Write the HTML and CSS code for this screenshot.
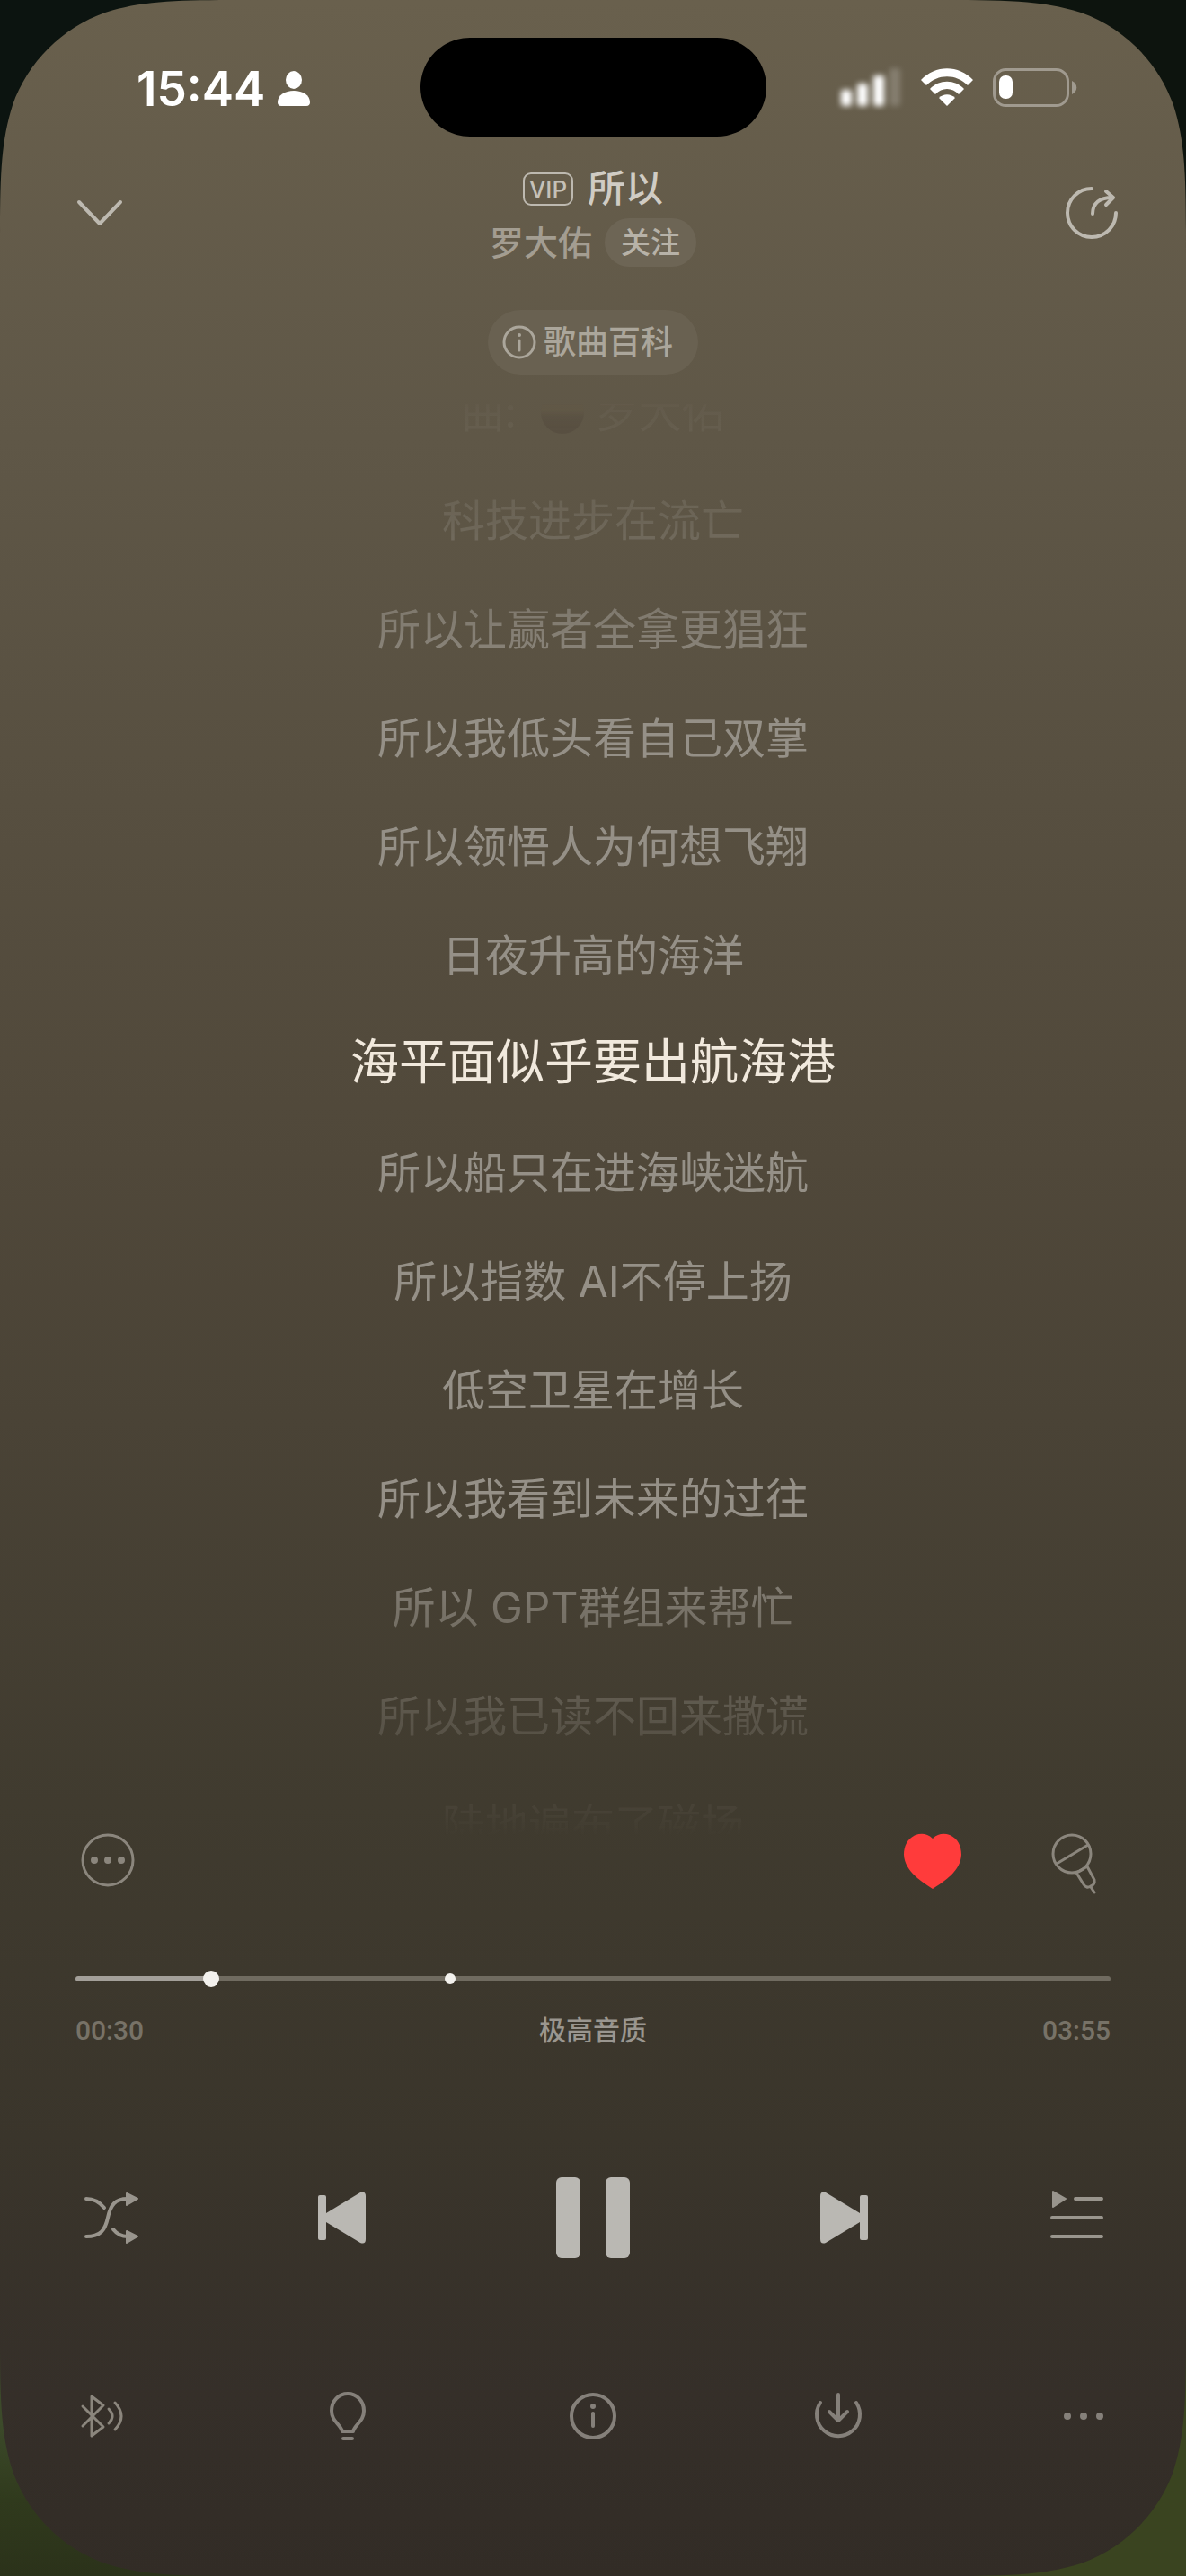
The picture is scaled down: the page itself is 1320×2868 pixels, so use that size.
FILE: index.html
```html
<!DOCTYPE html>
<html lang="zh-CN">
<head>
    <meta charset="UTF-8">
    <meta name="viewport" content="width=device-width, initial-scale=1.0">
    <title>所以 - 罗大佑</title>
    <link rel="stylesheet" href="styles.css">
</head>
<body>
    <div class="player">
        <!-- Скругления экрана -->
        <svg class="corner corner-tl" viewBox="0 0 284 284"><path d="M0 0V284C0 202 0 161 14 117C31 69 69 31 117 14C161 0 202 0 284 0Z"/></svg>
        <svg class="corner corner-tr" viewBox="0 0 284 284"><path d="M0 0V284C0 202 0 161 14 117C31 69 69 31 117 14C161 0 202 0 284 0Z"/></svg>
        <svg class="corner corner-bl" viewBox="0 0 284 284">
            <defs>
                <linearGradient id="grass" x1="0" y1="0" x2="0" y2="1">
                    <stop offset="0" stop-color="#2b321a"/>
                    <stop offset="0.3" stop-color="#303a1d"/>
                    <stop offset="0.6" stop-color="#3c4a2a"/>
                </linearGradient>
            </defs>
            <path d="M0 0V284C0 202 0 161 14 117C31 69 69 31 117 14C161 0 202 0 284 0Z"/>
        </svg>
        <svg class="corner corner-br" viewBox="0 0 284 284"><path d="M0 0V284C0 202 0 161 14 117C31 69 69 31 117 14C161 0 202 0 284 0Z"/></svg>

        <div class="status-bar">
            <div class="status-left">
                <span class="clock">15:44</span>
                <svg class="person" viewBox="0 0 36 40" width="36" height="40">
                    <ellipse cx="18" cy="10" rx="9" ry="10"/>
                    <path d="M0 35C0 27 8 22 18 22S36 27 36 35C36 37 35 39 32 39H4C1 39 0 37 0 35Z"/>
                </svg>
            </div>
            <div class="island"></div>
            <div class="status-right">
                <svg class="signal" viewBox="0 0 68 44" width="68" height="44">
                    <rect x="1" y="25" width="12" height="18" rx="3"/>
                    <rect x="19" y="18" width="12" height="25" rx="3"/>
                    <rect x="37" y="9" width="12" height="34" rx="3"/>
                    <rect x="55" y="1" width="12" height="42" rx="3" opacity=".2"/>
                </svg>
                <svg class="wifi" viewBox="0 0 58 42" width="58" height="42">
                    <path d="M0 13C16-4 42-4 58 13L52 19C39 6 19 6 6 19Z"/>
                    <path d="M10 23C20 12 38 12 48 23L42 29C35 21 23 21 16 29Z"/>
                    <path d="M20 33C25 28 33 28 38 33L29 42Z"/>
                </svg>
                <svg class="battery" viewBox="0 0 94 43" width="94" height="43">
                    <rect class="battery-shell" x="1.5" y="1.5" width="82" height="40" rx="13"/>
                    <path class="battery-cap" d="M88 14C95 17 95 26 88 29Z"/>
                    <rect x="7" y="8" width="15" height="26" rx="7"/>
                </svg>
            </div>
        </div>

        <header class="header">
            <button class="icon-btn light" aria-label="收起">
                <svg viewBox="0 0 96 96"><path d="M22 33L45 57L68 33"/></svg>
            </button>
            <div class="song">
                <h1 class="song-title"><span class="vip">VIP</span>所以</h1>
                <div class="song-artist">
                    <a href="#" class="artist">罗大佑</a>
                    <button class="follow">关注</button>
                </div>
            </div>
            <button class="icon-btn light" aria-label="分享">
                <svg viewBox="0 0 96 96">
                    <path d="M57 18A27 27 0 1 0 84 45"/>
                    <path d="M58 46C58 34 66 28 80 28M73 21L81 28L73 36"/>
                </svg>
            </button>
        </header>

        <button class="wiki">
            <svg viewBox="0 0 38 38" width="38" height="38">
                <circle cx="19" cy="19" r="17"/>
                <path d="M19 17V28"/>
                <circle class="fill" cx="19" cy="11" r="2"/>
            </svg>
            歌曲百科
        </button>

        <main class="lyrics">
            <ul class="lyrics-list">
                <li>曲: <span class="avatar"></span>罗大佑</li>
                <li>科技进步在流亡</li>
                <li>所以让赢者全拿更猖狂</li>
                <li>所以我低头看自己双掌</li>
                <li>所以领悟人为何想飞翔</li>
                <li>日夜升高的海洋</li>
                <li><span class="current">海平面似乎要出航海港</span></li>
                <li>所以船只在进海峡迷航</li>
                <li>所以指数 AI不停上扬</li>
                <li>低空卫星在增长</li>
                <li>所以我看到未来的过往</li>
                <li>所以 GPT群组来帮忙</li>
                <li>所以我已读不回来撒谎</li>
                <li>陆地遍布了磁场</li>
            </ul>
        </main>

        <div class="actions">
            <button class="icon-btn thin" aria-label="更多歌词选项">
                <svg viewBox="0 0 96 96">
                    <circle cx="54" cy="48" r="28"/>
                    <g class="fill"><circle cx="39" cy="48" r="4"/><circle cx="54" cy="48" r="4"/><circle cx="69" cy="48" r="4"/></g>
                </svg>
            </button>
            <div class="actions-right">
                <button class="icon-btn heart" aria-label="喜欢">
                    <svg viewBox="0 0 96 96"><path d="M48 24C54 18 61 18 67 20C76 24 80 32 80 42C79 60 62 71 48 80C34 71 17 60 16 42C16 32 20 24 29 20C35 18 42 18 48 24Z"/></svg>
                </button>
                <button class="icon-btn thin" aria-label="K歌">
                    <svg viewBox="0 0 96 96">
                        <circle cx="35" cy="41" r="21"/>
                        <path d="M18 52L53 31M40 62L48 75Q51 80 56 77Q61 75 60 70L52 55M56 78L60 84M40 62L52 55"/>
                    </svg>
                </button>
            </div>
        </div>

        <div class="progress">
            <input class="progress-range" type="range" min="0" max="235" step="0.1" value="29.4" aria-label="播放进度">
            <span class="chorus-mark"></span>
        </div>
        <div class="times">
            <span>00:30</span>
            <button class="quality">极高音质</button>
            <span>03:55</span>
        </div>

        <div class="controls">
            <button class="icon-btn medium" aria-label="随机播放">
                <svg viewBox="0 0 96 96">
                    <path d="M30 27C38 27 45 31 50 37M30 69C46 69 51 62 54 48C57 34 62 27 76 27M60 61C64 66 69 69 76 69"/>
                    <path class="fill round" d="M75 21L87 27L75 34ZM75 63L87 69L75 76Z"/>
                </svg>
            </button>
            <button class="icon-btn solid" aria-label="上一首">
                <svg viewBox="0 0 96 96">
                    <rect x="15" y="23" width="9" height="50" rx="2"/>
                    <path d="M24 43L62 20Q68 18 68 24V72Q68 78 62 76L24 53Z"/>
                </svg>
            </button>
            <button class="icon-btn solid" aria-label="暂停">
                <svg viewBox="0 0 96 96">
                    <rect x="7" y="3" width="27" height="90" rx="6"/>
                    <rect x="62" y="3" width="27" height="90" rx="6"/>
                </svg>
            </button>
            <button class="icon-btn solid" aria-label="下一首">
                <svg viewBox="0 0 96 96">
                    <rect x="72" y="23" width="9" height="50" rx="2"/>
                    <path d="M72 43L34 20Q28 18 28 24V72Q28 78 34 76L72 53Z"/>
                </svg>
            </button>
            <button class="icon-btn medium" aria-label="播放列表">
                <svg viewBox="0 0 96 96">
                    <path d="M39 27H68M13 48H68M13 69H68"/>
                    <path class="fill round" d="M14 19L28 27L14 36Z"/>
                </svg>
            </button>
        </div>

        <nav class="toolbar">
            <button class="icon-btn thin" aria-label="蓝牙设备">
                <svg viewBox="0 0 96 96">
                    <path d="M26 37L49 60L36 70V26L49 36L26 59"/>
                    <path d="M55 40Q63 48 55 56M62 33Q76 48 62 63"/>
                </svg>
            </button>
            <button class="icon-btn" aria-label="灵感">
                <svg viewBox="0 0 96 96">
                    <path d="M42 65H54C56 57 66 54 66 42C66 31 58 23 48 23S30 31 30 42C30 54 40 57 42 65ZM43 73H53"/>
                </svg>
            </button>
            <button class="icon-btn" aria-label="歌曲信息">
                <svg viewBox="0 0 96 96">
                    <circle cx="48" cy="48" r="24"/>
                    <path d="M48 45V59"/>
                    <circle class="fill" cx="48" cy="37" r="3"/>
                </svg>
            </button>
            <button class="icon-btn" aria-label="下载">
                <svg viewBox="0 0 96 96">
                    <path d="M28 33A24 24 0 1 0 68 33M48 24V52M38 43L48 53L58 43"/>
                </svg>
            </button>
            <button class="icon-btn" aria-label="更多">
                <svg viewBox="0 0 96 96">
                    <g class="fill"><circle cx="30" cy="48" r="4"/><circle cx="48" cy="48" r="4"/><circle cx="66" cy="48" r="4"/></g>
                </svg>
            </button>
        </nav>
    </div>
</body>
</html>
```

FILE: styles.css
```css
* {
    margin: 0;
    padding: 0;
    box-sizing: border-box;
}
body {
    font-family: Inter, "Noto Sans CJK SC", sans-serif;
    background-color: #332d27;
}
button {
    border: none;
    background: none;
    color: inherit;
    font: inherit;
    cursor: pointer;
}
a {
    color: inherit;
    text-decoration: none;
}
.player {
    position: relative;
    display: flex;
    flex-direction: column;
    height: 100vh;
    padding: 42px 0 130px;
    background: linear-gradient(#69604d 0%, #5f5747 17%, #574f40 31%, #50483a 45%, #4a4336 55%, #403b2f 70%, #3a352b 83%, #352f29 93%, #322c26 100%);
}

/* Углы экрана */
.corner {
    position: absolute;
    width: 284px;
    height: 284px;
}
.corner-tl {
    top: 0;
    left: 0;
    fill: #0c1410;
}
.corner-tr {
    top: 0;
    right: 0;
    fill: #0d140e;
    transform: scaleX(-1);
}
.corner-bl {
    bottom: 0;
    left: 0;
    fill: url(#grass);
    transform: scaleY(-1);
}
.corner-bl path {
    fill: url(#grass);
}
.corner-br {
    bottom: 0;
    right: 0;
    fill: #3a4420;
    transform: scale(-1);
}

/* Строка состояния */
.status-bar {
    display: grid;
    grid-template-columns: 1fr 385px 1fr;
    align-items: center;
    height: 110px;
    color: #fff;
    fill: #fff;
}
.status-left {
    display: flex;
    align-items: center;
    gap: 14px;
    padding: 3px 0 0 152px;
}
.clock {
    font-size: 53px;
    font-weight: 600;
    line-height: 60px;
}
.island {
    height: 110px;
    border-radius: 55px;
    background-color: #000;
}
.status-right {
    display: flex;
    align-items: center;
    justify-content: flex-end;
    gap: 22px;
    padding-right: 121px;
}
.signal {
    filter: blur(3px);
}
.battery-shell {
    fill: none;
    stroke: #a09a8f;
    stroke-width: 3;
}
.battery-cap {
    fill: #a09a8f;
}

/* Кнопки с иконками */
.icon-btn {
    width: 96px;
    height: 96px;
    color: #85807a;
}
.icon-btn svg {
    display: block;
    width: 96px;
    height: 96px;
    fill: none;
    stroke: currentColor;
    stroke-width: 4;
    stroke-linecap: round;
    stroke-linejoin: round;
}
.icon-btn .fill {
    fill: currentColor;
    stroke: none;
}
.icon-btn .round {
    stroke: currentColor;
    stroke-width: 2;
}
.light {
    color: #bdb9b0;
}
.thin {
    color: #8b867d;
}
.thin svg {
    stroke-width: 3;
}
.medium {
    color: #99958d;
}
.solid {
    color: #bab8b3;
}
.solid svg,
.heart svg {
    fill: currentColor;
    stroke: none;
}
.heart {
    color: #ff3b3b;
}

/* Шапка */
.header {
    display: flex;
    align-items: center;
    justify-content: space-between;
    margin-top: 31px;
    padding: 0 66px;
}
.song {
    display: flex;
    flex-direction: column;
    align-items: center;
    gap: 6px;
}
.song-title {
    display: flex;
    align-items: center;
    gap: 16px;
    height: 54px;
    color: #d0ccc4;
    font-size: 42px;
    font-weight: 500;
    line-height: 54px;
}
.vip {
    height: 37px;
    padding: 0 5px;
    border: 2px solid #bdb9b0;
    border-radius: 9px;
    color: #c5c1b8;
    font-size: 26px;
    font-weight: 500;
    line-height: 33px;
}
.song-artist {
    display: flex;
    align-items: center;
    gap: 14px;
}
.artist {
    color: #a39d91;
    font-size: 38px;
    font-weight: 500;
    line-height: 54px;
}
.follow {
    height: 54px;
    padding: 0 18px;
    border-radius: 27px;
    background-color: #6d6555;
    color: #b7b2a8;
    font-size: 33px;
    font-weight: 500;
    line-height: 54px;
}
.wiki {
    display: flex;
    align-items: center;
    align-self: center;
    gap: 8px;
    height: 72px;
    margin-top: 48px;
    padding: 0 28px 0 16px;
    border-radius: 36px;
    background-color: #696151;
    color: #aba69b;
    font-size: 36px;
    font-weight: 500;
    line-height: 54px;
}
.wiki svg {
    fill: none;
    stroke: currentColor;
    stroke-width: 3;
    stroke-linecap: round;
}
.wiki .fill {
    fill: currentColor;
    stroke: none;
}

/* Текст песни */
.lyrics {
    display: flex;
    flex: 1;
    flex-direction: column;
    justify-content: center;
    min-height: 0;
    margin: 33px 0 -22px;
    overflow: hidden;
    -webkit-mask-image: linear-gradient(rgba(0, 0, 0, .06) 0, rgba(0, 0, 0, .13) 30px, rgba(0, 0, 0, .28) 130px, rgba(0, 0, 0, .7) 250px, #000 340px, #000 calc(100% - 340px), rgba(0, 0, 0, .65) calc(100% - 255px), rgba(0, 0, 0, .3) calc(100% - 134px), rgba(0, 0, 0, .07) calc(100% - 25px), transparent 100%);
    mask-image: linear-gradient(rgba(0, 0, 0, .06) 0, rgba(0, 0, 0, .13) 30px, rgba(0, 0, 0, .28) 130px, rgba(0, 0, 0, .7) 250px, #000 340px, #000 calc(100% - 340px), rgba(0, 0, 0, .65) calc(100% - 255px), rgba(0, 0, 0, .3) calc(100% - 134px), rgba(0, 0, 0, .07) calc(100% - 25px), transparent 100%);
}
.lyrics-list {
    padding-bottom: 6px;
    list-style: none;
    color: #959087;
    font-size: 48px;
    line-height: 121px;
    text-align: center;
}
.lyrics-list li {
    height: 121px;
    white-space: nowrap;
}
.current {
    color: #f1e9dd;
    font-size: 54px;
    line-height: 54px;
}
.avatar {
    display: inline-block;
    width: 48px;
    height: 48px;
    margin: 0 13px;
    border-radius: 50%;
    background: linear-gradient(#6b5d3e 45%, #2c1c1c 60%);
    vertical-align: -7px;
}

/* Действия и прогресс */
.actions {
    display: flex;
    justify-content: space-between;
    padding: 0 66px;
}
.actions-right {
    display: flex;
    gap: 72px;
}
.progress {
    position: relative;
    height: 18px;
    margin: 75px 84px 0;
}
.progress-range {
    display: block;
    width: 100%;
    height: 18px;
    background: none;
    -webkit-appearance: none;
    appearance: none;
}
.progress-range::-webkit-slider-runnable-track {
    height: 6px;
    border-radius: 3px;
    background: linear-gradient(90deg, #a39f99 13%, #706b60 13%);
}
.progress-range::-webkit-slider-thumb {
    width: 18px;
    height: 18px;
    margin-top: -6px;
    border-radius: 50%;
    background-color: #f3f1ed;
    -webkit-appearance: none;
    appearance: none;
}
.chorus-mark {
    position: absolute;
    top: 3px;
    left: 411px;
    width: 12px;
    height: 12px;
    border-radius: 50%;
    background-color: #f3f1ed;
}
.times {
    display: flex;
    justify-content: space-between;
    margin-top: 29px;
    padding: 0 84px;
    color: #777267;
    font-family: Roboto, "Noto Sans CJK SC", sans-serif;
    font-size: 30px;
    font-weight: 500;
    line-height: 40px;
}
.quality {
    color: #9a968f;
}

/* Управление */
.controls,
.toolbar {
    display: flex;
    justify-content: space-between;
    padding: 0 66px;
}
.controls {
    margin-top: 140px;
}
.toolbar {
    margin-top: 125px;
}
```
